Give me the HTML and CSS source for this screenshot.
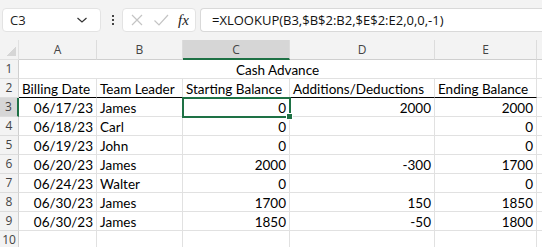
FILE: index.html
```html
<!DOCTYPE html>
<html lang="en">
<head>
    <meta charset="UTF-8">
    <meta name="viewport" content="width=device-width, initial-scale=1.0">
    <title>Cash Advance</title>
    <link rel="stylesheet" href="styles.css">
</head>
<body>
    <div class="formula-bar">
        <div class="name-box">
            <span>C3</span>
            <svg class="chevron" width="12" height="8" viewBox="0 0 12 8"><path d="M1.5 2 L6 6 L10.5 2" fill="none" stroke="#333" stroke-width="1.2"/></svg>
        </div>
        <div class="dots"><i></i><i></i><i></i></div>
        <div class="fx-box">
            <svg width="14" height="14" viewBox="0 0 14 14"><path d="M2 2 L12 12 M12 2 L2 12" stroke="#c4c4c4" stroke-width="1.2" fill="none"/></svg>
            <svg width="16" height="14" viewBox="0 0 16 14"><path d="M1.5 7.5 L6 12 L15 2" stroke="#c4c4c4" stroke-width="1.2" fill="none"/></svg>
            <span class="fx">fx</span>
        </div>
        <div class="formula-input">=XLOOKUP(B3,$B$2:B2,$E$2:E2,0,0,-1)</div>
    </div>

    <div class="sheet">
        <!-- column headers -->
        <div class="corner"></div>
        <div class="col-head">A</div>
        <div class="col-head">B</div>
        <div class="col-head active">C</div>
        <div class="col-head">D</div>
        <div class="col-head">E</div>
        <div class="col-head"></div>

        <!-- row 1 -->
        <div class="row-head">1</div>
        <div class="cell merged">Cash Advance</div>
        <div class="cell"></div>

        <!-- row 2 -->
        <div class="row-head">2</div>
        <div class="cell title">Billing Date</div>
        <div class="cell title">Team Leader</div>
        <div class="cell title">Starting Balance</div>
        <div class="cell title">Additions/Deductions</div>
        <div class="cell title">Ending Balance</div>
        <div class="cell"></div>
    </div>

    <script src="sheet.js"></script>
</body>
</html>
```

FILE: sheet.js
```js
// rows 3..10 of the sheet
var rows = [
    ["06/17/23", "James", "0", "2000", "2000"],
    ["06/18/23", "Carl", "0", "", "0"],
    ["06/19/23", "John", "0", "", "0"],
    ["06/20/23", "James", "2000", "-300", "1700"],
    ["06/24/23", "Walter", "0", "", "0"],
    ["06/30/23", "James", "1700", "150", "1850"],
    ["06/30/23", "James", "1850", "-50", "1800"],
    ["", "", "", "", ""]
];

var sheet = document.querySelector(".sheet");

rows.forEach(function(row, i) {
    var num = i + 3;
    var head = document.createElement("div");
    head.className = "row-head" + (num === 3 ? " active" : "");
    head.textContent = num;
    sheet.appendChild(head);

    row.forEach(function(value, col) {
        var cell = document.createElement("div");
        cell.className = "cell" + (col === 1 ? "" : " num");
        if (num === 3 && col === 2) {
            cell.className += " selected";
        }
        cell.textContent = value;
        sheet.appendChild(cell);
    });

    // column F
    var extra = document.createElement("div");
    extra.className = "cell";
    sheet.appendChild(extra);
});
```

FILE: styles.css
```css
body {
    margin: 0;
    background-color: #ffffff;
    font-family: Lato, "Liberation Sans", sans-serif;
    overflow: hidden;
}

.formula-bar {
    display: flex;
    align-items: center;
    height: 40px;
    padding-left: 2px;
    background-color: #f3f3f3;
    box-sizing: border-box;
}

.name-box {
    display: flex;
    align-items: center;
    justify-content: space-between;
    width: 99px;
    height: 24px;
    padding: 0 12px 0 7px;
    box-sizing: border-box;
    background-color: #ffffff;
    border: 1px solid #e3e3e3;
    border-radius: 4px;
    font-family: "Open Sans", sans-serif;
    font-size: 13px;
    color: #222;
}

.dots {
    display: flex;
    flex-direction: column;
    gap: 2px;
    margin: 0 8px 0 11px;
}

.dots i {
    width: 2px;
    height: 2px;
    background-color: #444;
}

.fx-box {
    display: flex;
    align-items: center;
    gap: 9px;
    width: 74px;
    height: 24px;
    padding-left: 7px;
    box-sizing: border-box;
    background-color: #ffffff;
    border: 1px solid #e3e3e3;
    border-radius: 4px;
}

.fx {
    font-family: "Liberation Serif", serif;
    font-style: italic;
    font-size: 15px;
    color: #222;
}

.formula-input {
    flex: 1;
    height: 24px;
    margin-left: 4px;
    padding-left: 11px;
    line-height: 22px;
    box-sizing: border-box;
    background-color: #ffffff;
    border: 1px solid #d9d9d9;
    border-right: none;
    border-radius: 4px 0 0 4px;
    font-family: "Open Sans", sans-serif;
    font-size: 13px;
    color: #111;
    white-space: nowrap;
}

.sheet {
    display: grid;
    grid-template-columns: 19px 78px 86px 107px 145px 102px 1fr;
    grid-template-rows: 20px;
    grid-auto-rows: 19px;
}

.sheet > div {
    box-sizing: border-box;
    border-right: 1px solid #e1e1e1;
    border-bottom: 1px solid #e1e1e1;
    white-space: nowrap;
    overflow: hidden;
}

.corner {
    background: linear-gradient(135deg, transparent 55%, #d6d6d6 55%) no-repeat 5px 5px / 11px 11px, #f3f3f3;
}

.col-head {
    background-color: #f3f3f3;
    text-align: center;
    font-family: "Open Sans", sans-serif;
    font-size: 12px;
    line-height: 19px;
    color: #444;
}

.sheet > .col-head {
    border-right-color: #dcdcdc;
    border-bottom-color: #cfcfcf;
}

.sheet > .col-head.active {
    background-color: #d6d6d6;
    border-bottom: 2px solid #1e7145;
}

.row-head {
    background-color: #f3f3f3;
    text-align: center;
    font-family: "Open Sans", sans-serif;
    font-size: 12px;
    line-height: 18px;
    color: #444;
}

.sheet > .row-head {
    border-right-color: #cfcfcf;
    border-bottom-color: #dcdcdc;
}

.sheet > .row-head.active {
    background-color: #d6d6d6;
    border-right: 2px solid #1e7145;
}

.cell {
    padding: 1px 3px 0;
    font-size: 13.5px;
    line-height: 18px;
    color: #000;
}

.merged {
    grid-column: 2 / 7;
    text-align: center;
}

.sheet > .title {
    border-bottom-color: #000000;
}

.num {
    text-align: right;
}

.sheet > .selected {
    position: relative;
    overflow: visible;
    outline: 2px solid #1e7145;
    outline-offset: -1px;
}

.selected::after {
    content: "";
    position: absolute;
    right: -4px;
    bottom: -4px;
    width: 5px;
    height: 5px;
    background-color: #1e7145;
    border: 1px solid #ffffff;
    z-index: 2;
}
```
